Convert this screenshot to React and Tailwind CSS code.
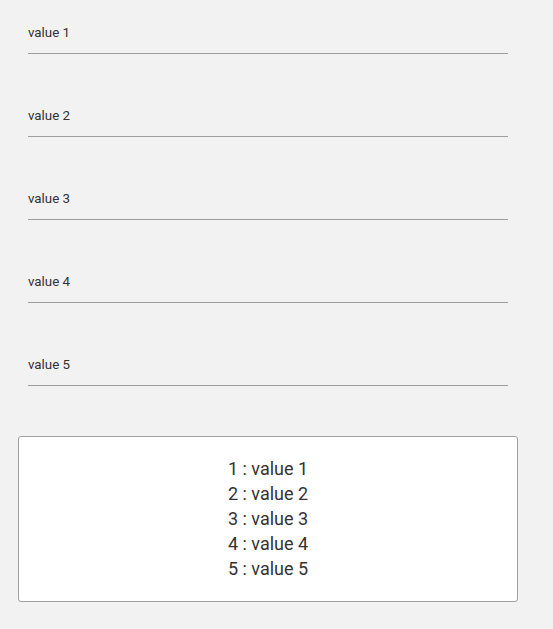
import React, { useState } from "react";

const INITIAL = ["value 1", "value 2", "value 3", "value 4", "value 5"];

const App = () => {
  const [values, setValues] = useState(INITIAL);

  const update = (idx, v) => {
    setValues(prev => prev.map((p, i) => (i === idx ? v : p)));
  };

  return (
    <div
      className="min-h-[629px] w-full bg-[#f2f2f2] pt-[25px] pl-[18px]"
      style={{ fontFamily: "Roboto, 'Liberation Sans', sans-serif" }}
    >
      {/* 입력 필드 목록 */}
      <div className="flex flex-col gap-[54px] pl-[10px]">
        {values.map((v, idx) => (
          <div key={idx} className="w-[480px] border-b border-[#9e9e9e] pb-[12px]">
            <input
              value={v}
              onChange={e => update(idx, e.target.value)}
              className="block w-full h-4 bg-transparent p-0 text-[13.33px] leading-4 text-[#333] outline-none"
            />
          </div>
        ))}
      </div>

      {/* 결과 박스 */}
      <div className="mt-[50px] w-[500px] h-[166px] rounded-[3px] border border-[#a0a0a0] bg-white pb-[2px] flex flex-col items-center justify-center">
        {values.map((v, idx) => (
          <div key={idx} className="text-[18px] leading-[25px] text-[#333]">
            {idx + 1} : {v}
          </div>
        ))}
      </div>
    </div>
  );
};

export default App;
